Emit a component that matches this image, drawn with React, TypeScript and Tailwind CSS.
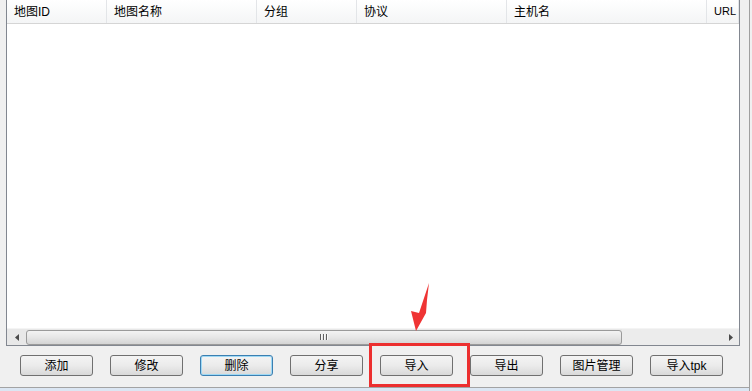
import React from 'react';

const columns = [
  { label: '地图ID', width: 'w-[100px]' },
  { label: '地图名称', width: 'w-[150px]' },
  { label: '分组', width: 'w-[100px]' },
  { label: '协议', width: 'w-[150px]' },
  { label: '主机名', width: 'w-[200px]' },
  { label: 'URL', width: 'flex-1' },
];

const buttons = ['添加', '修改', '删除', '分享', '导入', '导出', '图片管理', '导入tpk'];

const App: React.FC = () => {
  return (
    <div className="relative w-[752px] h-[391px] overflow-hidden bg-[#f0f0f0] flex flex-col font-['Liberation_Sans','Noto_Sans_CJK_SC',sans-serif] text-[12px] text-black">
      <div className="flex-1 flex flex-col border-r border-[#a0a0a0] w-[750px]">
        {/* list view */}
        <div className="ml-[6px] w-[734px] h-[346px] bg-white border-l border-r border-b border-[#828790] flex flex-col">
          <div className="h-[24px] flex border-b border-[#d5d5d5] bg-gradient-to-b from-white to-[#f4f5f6]">
            {columns.map((col) => (
              <div
                key={col.label}
                className={`${col.width} h-full pl-[7px] flex items-center border-r border-[#e3e5e8] leading-none`}
              >
                {col.label === 'URL' ? (
                  <span className="text-[11px] pl-[0px]">{col.label}</span>
                ) : (
                  col.label
                )}
              </div>
            ))}
          </div>
          <div className="flex-1" />
          {/* horizontal scrollbar */}
          <div className="h-[17px] flex items-center bg-[#e8e8e8] border-t border-[#f4f4f4]">
            <div className="w-[19px] h-full flex items-center justify-center">
              <svg width="4" height="7" viewBox="0 0 4 7">
                <polygon points="4,0 0,3.5 4,7" fill="#4a4a4a" />
              </svg>
            </div>
            <div className="w-[596px] h-[15px] rounded-[3px] border border-[#9a9a9a] bg-gradient-to-b from-[#f3f3f3] via-[#e6e6e6] to-[#d4d4d4] flex items-center justify-center">
              <div className="flex gap-[1px]">
                <div className="w-[2px] h-[6px] bg-[#606060] border-r border-[#f8f8f8]" />
                <div className="w-[2px] h-[6px] bg-[#606060] border-r border-[#f8f8f8]" />
                <div className="w-[2px] h-[6px] bg-[#606060] border-r border-[#f8f8f8]" />
              </div>
            </div>
            <div className="flex-1 h-full bg-[#ececec]" />
            <div className="w-[17px] h-full flex items-center justify-center bg-[#ececec]">
              <svg width="4" height="7" viewBox="0 0 4 7">
                <polygon points="0,0 4,3.5 0,7" fill="#4a4a4a" />
              </svg>
            </div>
          </div>
        </div>

        {/* buttons */}
        <div className="mt-[9px] pl-[20px] flex gap-[17px]">
          {buttons.map((b) => (
            <button
              key={b}
              className={`w-[73px] h-[21px] rounded-[3px] flex items-center justify-center text-[12px] leading-none bg-gradient-to-b from-[#f4f4f4] via-[#ebebeb] to-[#d9d9d9] ${
                b === '删除'
                  ? 'border border-[#3c7fb1] shadow-[inset_0_0_0_1px_#9ed9f5]'
                  : 'border border-[#707070]'
              }`}
            >
              {b === '导入tpk' ? (
                <span>
                  导入<span className="text-[12px]">tpk</span>
                </span>
              ) : (
                b
              )}
            </button>
          ))}
        </div>

        <div className="mt-auto h-[4px] border-t border-[#a3a3a3] bg-[#dbe6f3]" />
      </div>

      {/* annotation: red box */}
      <div className="absolute left-[369px] top-[343px] w-[101px] h-[44px] border-[3px] border-[#ec2f2f]" />
      {/* annotation: red arrow */}
      <svg className="absolute left-0 top-0" width="752" height="391" viewBox="0 0 752 391">
        <polygon
          points="429,283 427,300 426,313 416,331 411,311 419,313 428,286"
          fill="#ef3434"
        />
      </svg>
    </div>
  );
};

export default App;
